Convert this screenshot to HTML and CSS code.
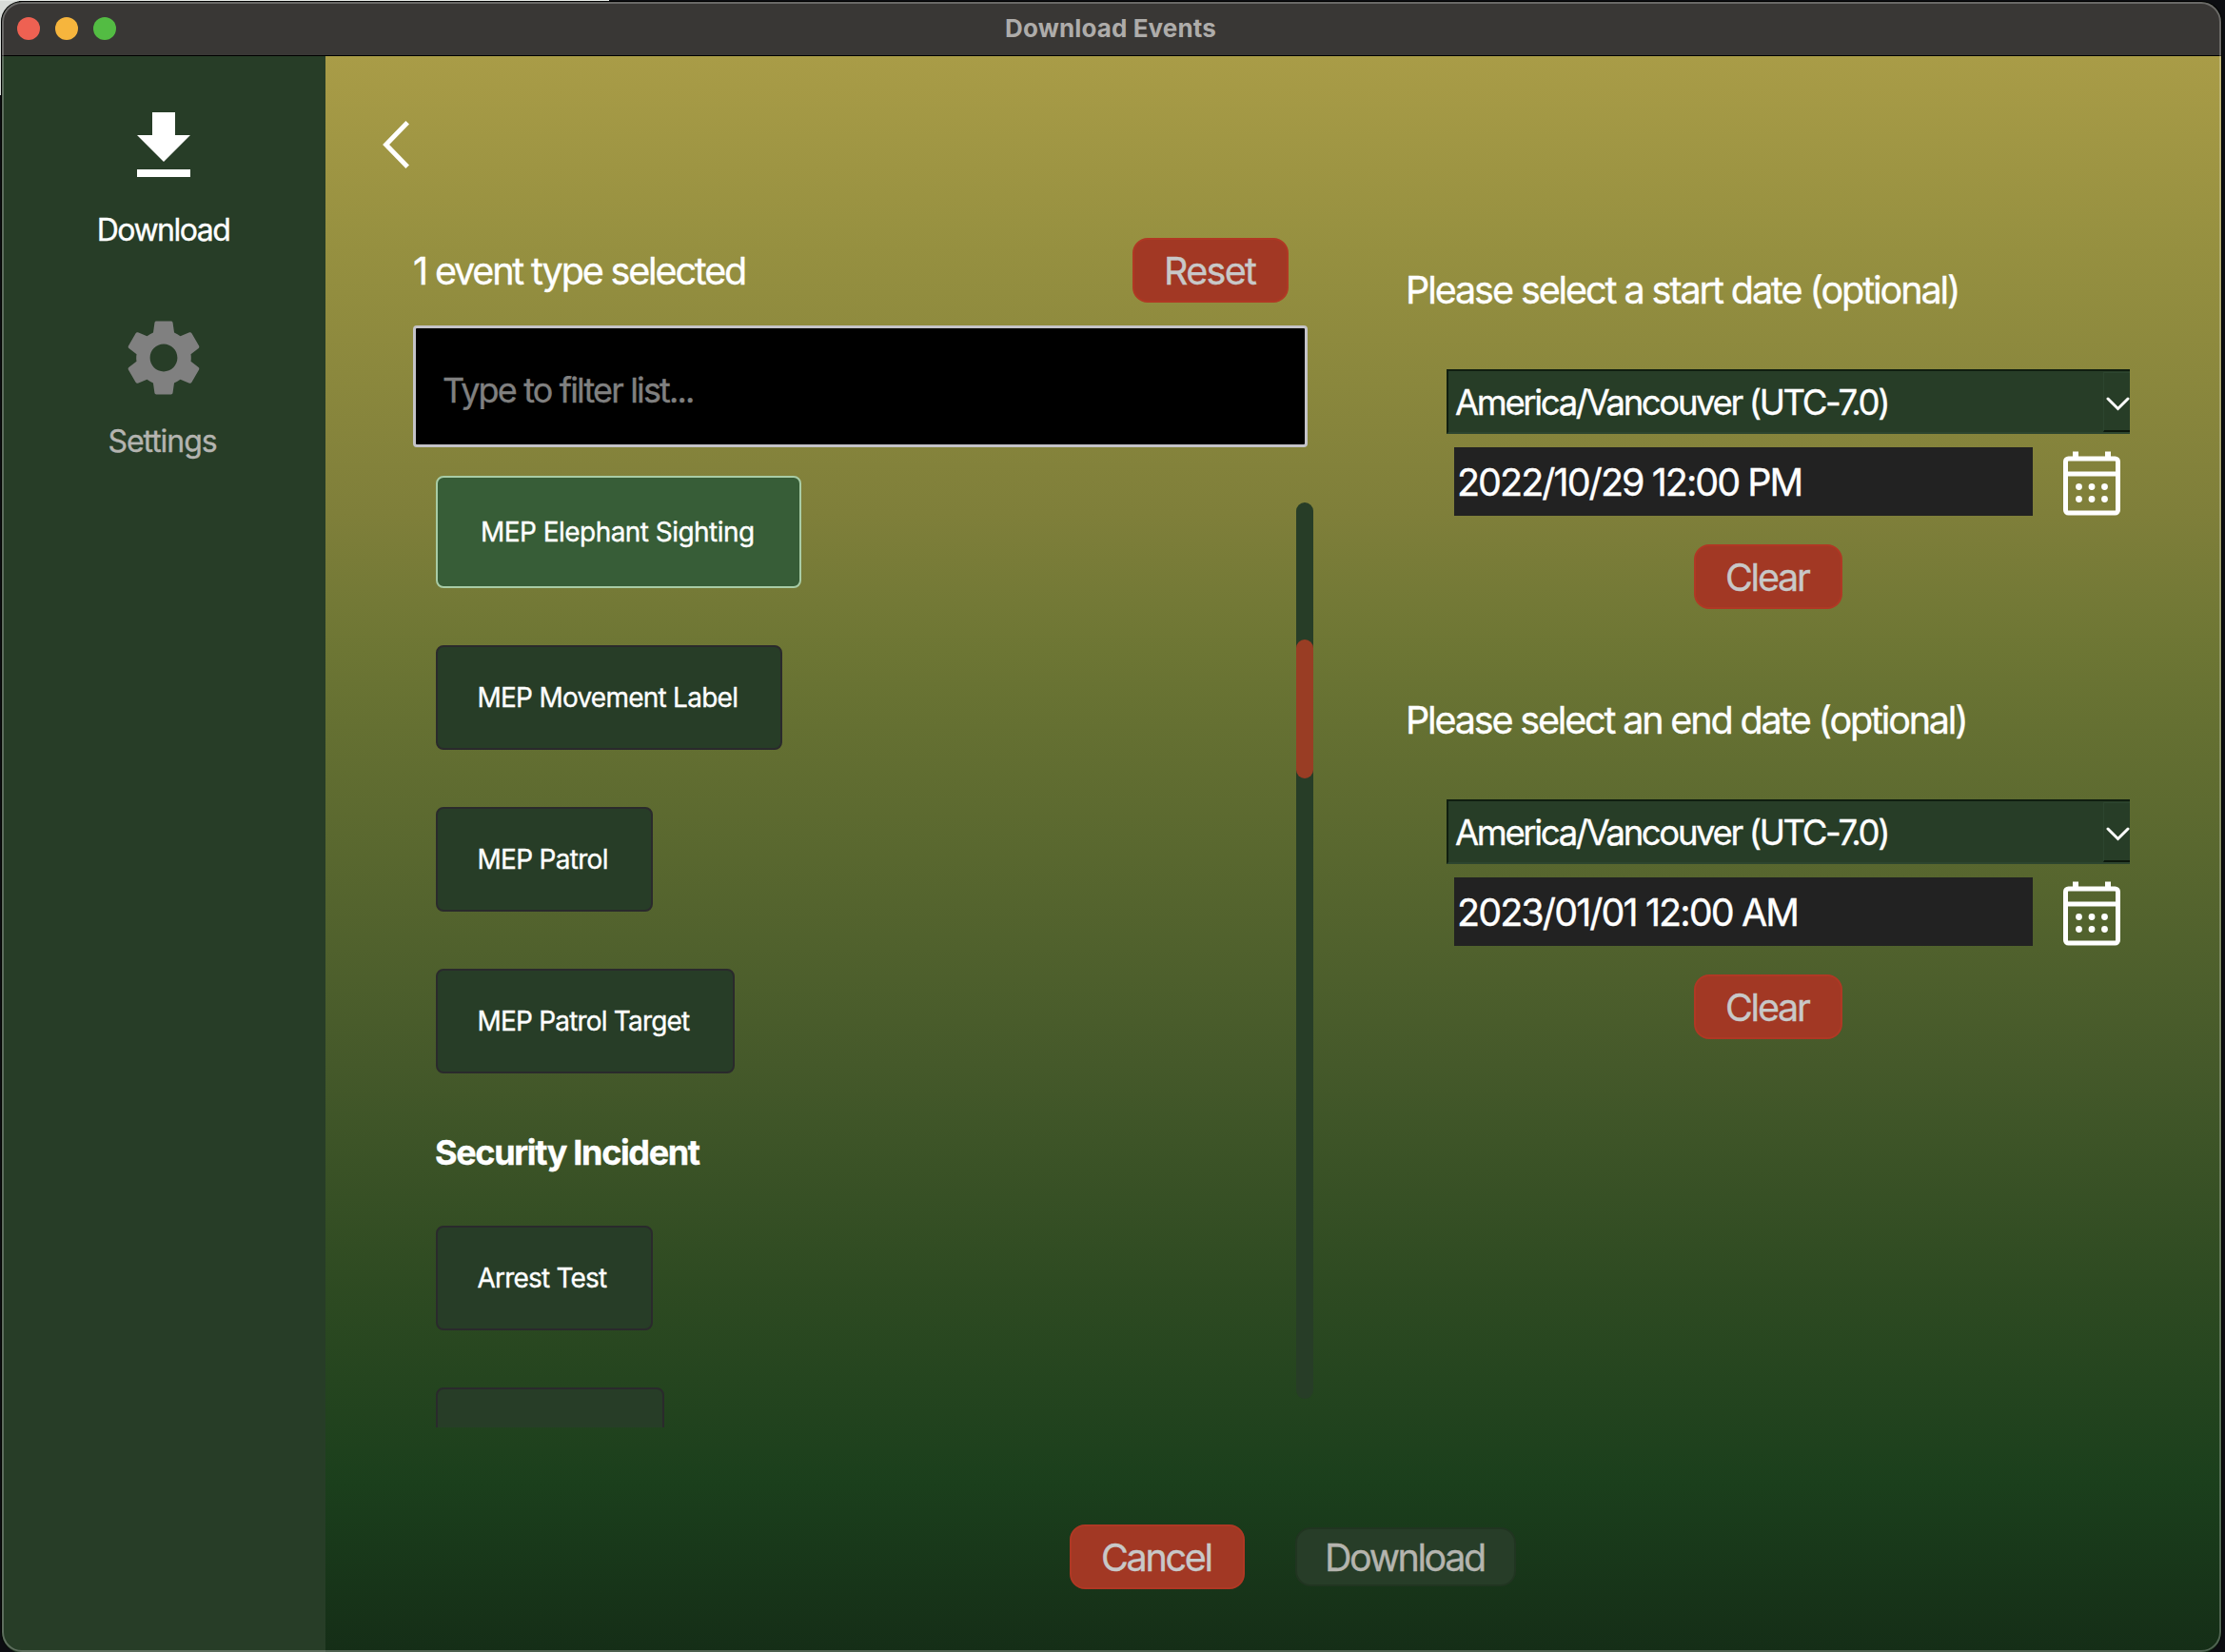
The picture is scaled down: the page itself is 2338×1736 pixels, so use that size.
FILE: index.html
```html
<!DOCTYPE html>
<html lang="en">
<head>
<meta charset="utf-8">
<title>Download Events</title>
<link rel="stylesheet" href="styles.css">
</head>
<body>
<div class="window">
  <header class="titlebar">
    <div class="lights">
      <span class="light light-close"></span>
      <span class="light light-min"></span>
      <span class="light light-max"></span>
    </div>
    <div class="title">Download Events</div>
  </header>
  <div class="body">
    <nav class="sidebar">
      <div class="nav-item">
        <svg class="nav-icon" viewBox="0 0 24 24" fill="#fff"><path d="M19 9h-4V3H9v6H5l7 7 7-7zM5 18v2h14v-2H5z"/></svg>
        <span class="nav-label nav-download">Download</span>
      </div>
      <div class="nav-item nav-muted">
        <svg class="nav-icon" viewBox="0 0 24 24" fill="#808080"><path d="M19.14 12.94c.04-.3.06-.61.06-.94 0-.32-.02-.64-.07-.94l2.03-1.58c.18-.14.23-.41.12-.61l-1.92-3.32c-.12-.22-.37-.29-.59-.22l-2.39.96c-.5-.38-1.03-.7-1.62-.94l-.36-2.54c-.04-.24-.24-.41-.48-.41h-3.84c-.24 0-.43.17-.47.41l-.36 2.54c-.59.24-1.13.57-1.62.94l-2.39-.96c-.22-.08-.47 0-.59.22L2.74 8.87c-.12.21-.08.47.12.61l2.03 1.58c-.05.3-.09.63-.09.94s.02.64.07.94l-2.03 1.58c-.18.14-.23.41-.12.61l1.92 3.32c.12.22.37.29.59.22l2.39-.96c.5.38 1.03.7 1.62.94l.36 2.54c.05.24.24.41.48.41h3.84c.24 0 .44-.17.47-.41l.36-2.54c.59-.24 1.13-.56 1.62-.94l2.39.96c.22.08.47 0 .59-.22l1.92-3.32c.12-.22.07-.47-.12-.61l-2.01-1.58zM12 15.6c-1.98 0-3.6-1.62-3.6-3.6s1.62-3.6 3.6-3.6 3.6 1.62 3.6 3.6-1.62 3.6-3.6 3.6z"/></svg>
        <span class="nav-label nav-settings">Settings</span>
      </div>
    </nav>
    <main class="main">
      <div class="back">
        <svg class="back-icon" viewBox="0 0 28 50" fill="none" stroke="#fff" stroke-width="5"><path d="M26.200 1.800 3.600 25l22.600 23.200"/></svg>
      </div>
      <div class="columns">
        <section class="events">
          <div class="events-head">
            <span class="count">1 event type selected</span>
            <button class="btn btn-reset">Reset</button>
          </div>
          <div class="filter">Type to filter list...</div>
          <div class="list-area">
            <div class="list">
              <div class="chip chip-on chip-elephant">MEP Elephant Sighting</div>
              <div class="chip chip-movement">MEP Movement Label</div>
              <div class="chip chip-patrol">MEP Patrol</div>
              <div class="chip chip-target">MEP Patrol Target</div>
              <div class="group">Security Incident</div>
              <div class="chip chip-arrest">Arrest Test</div>
              <div class="chip chip-cut"></div>
            </div>
            <div class="scroll"><div class="thumb"></div></div>
          </div>
        </section>
        <section class="dates">
          <div class="date-group">
            <div class="date-label">Please select a start date (optional)</div>
            <div class="combo">
              <span class="combo-text">America/Vancouver (UTC-7.0)</span>
              <span class="combo-arrow"><svg width="25" height="16" viewBox="0 0 25 16" fill="none" stroke="#fff" stroke-width="3" stroke-linecap="round"><path d="M2 2 12.500 12.500 23 2"/></svg></span>
            </div>
            <div class="date-row">
              <div class="date-field">2022/10/29 12:00 PM</div>
              <svg class="calendar" viewBox="0 0 60 68" fill="none" stroke="#fff"><rect x="2.500" y="8" width="55" height="57" rx="3" stroke-width="5"/><path d="M0 24H60" stroke-width="5"/><path d="M13 0.500V8M47 0.500V8" stroke-width="6"/><path d="M16.500 37.500h.01M30 37.500h.01M43.500 37.500h.01M16.500 50.500h.01M30 50.500h.01M43.500 50.500h.01" stroke-width="6.800" stroke-linecap="round"/></svg>
            </div>
            <button class="btn btn-clear">Clear</button>
          </div>
          <div class="date-group">
            <div class="date-label date-label-end">Please select an end date (optional)</div>
            <div class="combo">
              <span class="combo-text">America/Vancouver (UTC-7.0)</span>
              <span class="combo-arrow"><svg width="25" height="16" viewBox="0 0 25 16" fill="none" stroke="#fff" stroke-width="3" stroke-linecap="round"><path d="M2 2 12.500 12.500 23 2"/></svg></span>
            </div>
            <div class="date-row">
              <div class="date-field date-end">2023/01/01 12:00 AM</div>
              <svg class="calendar" viewBox="0 0 60 68" fill="none" stroke="#fff"><rect x="2.500" y="8" width="55" height="57" rx="3" stroke-width="5"/><path d="M0 24H60" stroke-width="5"/><path d="M13 0.500V8M47 0.500V8" stroke-width="6"/><path d="M16.500 37.500h.01M30 37.500h.01M43.500 37.500h.01M16.500 50.500h.01M30 50.500h.01M43.500 50.500h.01" stroke-width="6.800" stroke-linecap="round"/></svg>
            </div>
            <button class="btn btn-clear">Clear</button>
          </div>
        </section>
      </div>
      <footer class="actions">
        <button class="btn btn-cancel">Cancel</button>
        <button class="btn btn-download" disabled>Download</button>
      </footer>
    </main>
  </div>
</div>
</body>
</html>
```
FILE: styles.css
```css
* { box-sizing: border-box; }

body {
  margin: 0;
  height: 1736px;
  padding: 1px 3px 0 1px;
  overflow: hidden;
  font-family: Inter, "Liberation Sans", sans-serif;
  -webkit-text-stroke: .35px currentColor;
  color: #fff;
  white-space: nowrap;
  background:
    linear-gradient(#e6eae6, #e6eae6) 0 0 / 640px 1px no-repeat,
    linear-gradient(#d8dcd8, #d8dcd8) 0 0 / 20px 100px no-repeat,
    #0c0d11;
}

/* window frame */
.window {
  position: relative;
  height: 1736px;
  border: 1px solid #000;
  border-bottom: 0;
  border-radius: 22px;
  overflow: hidden;
  display: flex;
  flex-direction: column;
  background: #273d27;
}
.window::after {
  content: "";
  position: absolute;
  inset: 0 0 1px 0;
  border: 2px solid rgba(255, 255, 255, .25);
  border-radius: 21px;
}

.titlebar {
  height: 57px;
  flex: none;
  position: relative;
  display: flex;
  align-items: center;
  justify-content: center;
  background: #393735;
  border-bottom: 1px solid #000;
}
.lights {
  position: absolute;
  left: 16px;
  top: 16px;
  display: flex;
  gap: 16px;
}
.light { width: 24px; height: 24px; border-radius: 50%; }
.light-close { background: #ee6152; }
.light-min { background: #f6b53d; }
.light-max { background: #53bc43; }
.title {
  font-size: 26px;
  font-weight: 700;
  letter-spacing: .12px;
  color: #aeacaa;
  padding: 0 2px 2px 0;
  -webkit-text-stroke: 0;
}

.body { flex: 1; display: flex; }

/* sidebar */
.sidebar {
  width: 340px;
  padding-top: 47px;
  display: flex;
  flex-direction: column;
  gap: 66px;
  background: #273d27;
}
.nav-item {
  display: flex;
  flex-direction: column;
  align-items: center;
  gap: 20px;
}
.nav-icon { width: 96px; height: 96px; }
.nav-label { font-size: 32px; line-height: 40px; }
.nav-download { letter-spacing: -1.5px; padding-right: 1px; }
.nav-settings { letter-spacing: -1.05px; padding-right: 3px; }
.nav-muted { color: #b4b4b0; }

/* main area */
.main {
  flex: 1;
  background: linear-gradient(#a99c47 0, #969040 200px, #7f7f3a 480px, #6d7634 625px, #697333 660px, #45592a 1060px, #2f4b22 1280px, #1b3f1c 1500px, #152e17 1676px);
}
.back { padding: 68px 0 0 60px; height: 118px; }
.back-icon { display: block; width: 28px; height: 50px; }
.columns {
  display: flex;
  margin: 73px 0 0 92px;
  height: 1250px;
}

.btn {
  display: flex;
  align-items: center;
  height: 68px;
  padding: 2px 0 0;
  font: 39.5px Inter, "Liberation Sans", sans-serif;
  color: #c8c8c8;
  background: #a23824;
  border: 2px solid #b03824;
  border-radius: 16px;
}
.btn-reset { width: 164px; padding-left: 31px; letter-spacing: -1.69px; }
.btn-clear { width: 156px; margin: 30px 0 0 302px; padding-left: 31px; letter-spacing: -2.25px; }
.btn-cancel { width: 184px; padding-left: 31px; letter-spacing: -2.29px; }
.btn-download {
  width: 232px;
  height: 62px;
  padding-left: 29px;
  letter-spacing: -2.42px;
  color: #b4b4ae;
  background: #273d28;
  border-color: #213521;
}

.events { width: 946px; }
.events-head {
  display: flex;
  align-items: center;
  justify-content: space-between;
  width: 920px;
  height: 68px;
}
.count { padding-top: 2px; font-size: 39.5px; letter-spacing: -2.15px; }
.filter {
  display: flex;
  align-items: center;
  width: 940px;
  height: 128px;
  margin-top: 24px;
  padding: 8px 0 0 28px;
  font-size: 36px;
  letter-spacing: -1.85px;
  color: #808080;
  background: #000;
  border: 3px solid #c4c3c8;
  border-radius: 4px;
}
.list-area { display: flex; margin-top: 30px; }
.list {
  width: 928px;
  height: 1000px;
  padding-left: 24px;
  overflow: hidden;
  display: flex;
  flex-direction: column;
  align-items: flex-start;
}
.chip {
  flex: none;
  display: flex;
  align-items: center;
  height: 110px;
  margin-bottom: 60px;
  padding-left: 41.5px;
  font-size: 28px;
  background: #273d27;
  border: 2px solid #2a2a2c;
  border-radius: 8px;
}
.chip-on { height: 118px; padding-left: 45px; background: #375d37; border-color: #a8cca6; }
.chip-elephant { width: 384px; letter-spacing: -.54px; }
.chip-movement { width: 364px; letter-spacing: -.75px; }
.chip-patrol { width: 228px; letter-spacing: -.7px; }
.chip-target { width: 314px; letter-spacing: -.81px; }
.chip-arrest { width: 228px; letter-spacing: -.8px; }
.chip-cut { width: 240px; }
.group {
  flex: none;
  height: 44px;
  margin: 1px 0 55px -1px;
  line-height: 44px;
  font-size: 36px;
  font-weight: 700;
  letter-spacing: -1.35px;
}
.scroll {
  width: 18px;
  height: 942px;
  margin-top: 28px;
  padding-top: 144px;
  border-radius: 9px;
  background: #273d27;
}
.thumb { height: 146px; border-radius: 9px; background: #993d24; }

/* date pickers */
.dates {
  margin-left: 98px;
  padding-top: 31px;
  display: flex;
  flex-direction: column;
  gap: 93px;
}
.date-label { font-size: 39.5px; line-height: 48px; letter-spacing: -2.07px; margin-left: -1px; }
.date-label-end { letter-spacing: -2.16px; }
.combo {
  display: flex;
  width: 718px;
  height: 68px;
  margin: 59px 0 0 42px;
  background: #273d27;
  border-top: 2px solid #101e10;
  border-left: 2px solid #101e10;
  border-bottom: 2px solid #2d452f;
}
.combo-text {
  flex: 1;
  padding-left: 7px;
  font-size: 36.5px;
  line-height: 66px;
  letter-spacing: -2.36px;
}
.combo-arrow {
  width: 28px;
  height: 63px;
  margin-top: 1px;
  padding: 25px 0 0 2px;
  border-top: 1px solid #2d452f;
  border-left: 1px solid #2d452f;
  border-bottom: 2px solid #0c180c;
}
.combo-arrow svg { display: block; }
.date-row { display: flex; gap: 32px; margin: 14px 0 0 50px; }
.date-field {
  width: 608px;
  height: 72px;
  padding-left: 3px;
  line-height: 74px;
  font-size: 39.5px;
  letter-spacing: -1.97px;
  background: #222;
}
.date-end { letter-spacing: -1.92px; }
.calendar { width: 60px; height: 68px; margin-top: 4px; }

.actions {
  display: flex;
  align-items: center;
  gap: 53px;
  margin: 102px 0 0 782px;
}
```
